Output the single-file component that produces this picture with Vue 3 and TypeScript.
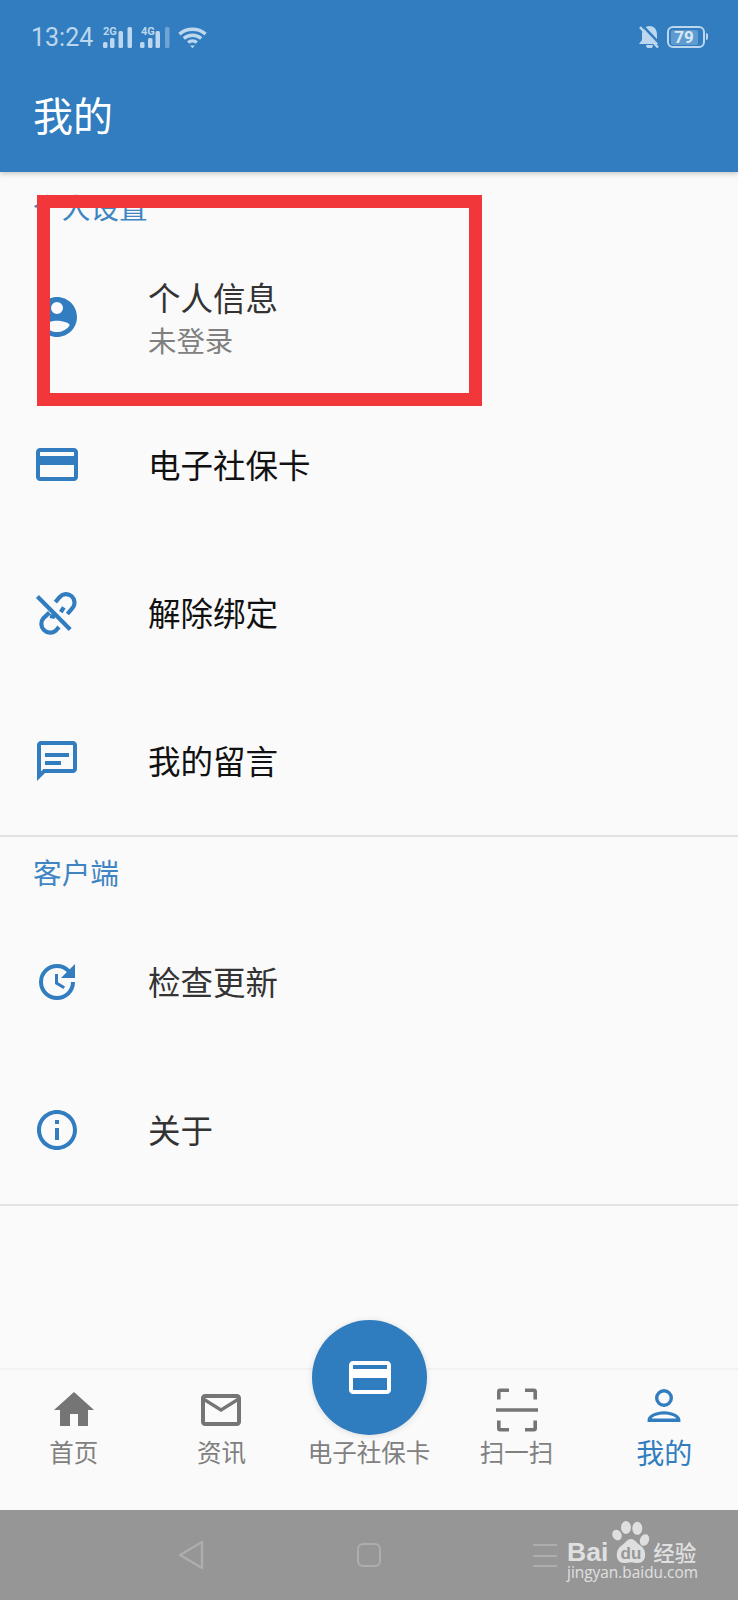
<template>
  <div class="phone">
    <header class="app-header">
      <div class="status-bar">
        <span class="clock">13:24</span>
        <svg class="signal" width="32" height="22" viewBox="0 0 32 22">
          <text x="1" y="9" class="net-label">2G</text>
          <rect x="1" y="16" width="4.500" height="6" rx="1.5" />
          <rect x="8" y="12" width="4.500" height="10" rx="1.5" />
          <rect x="16.500" y="5" width="4.500" height="17" rx="1.5" />
          <rect x="25.500" y="1" width="4.500" height="21" rx="1.5" />
        </svg>
        <svg class="signal" width="32" height="22" viewBox="0 0 32 22">
          <text x="1" y="9" class="net-label">4G</text>
          <rect x="0" y="16" width="4.500" height="6" rx="1.5" />
          <rect x="8" y="12" width="4.500" height="10" rx="1.5" />
          <rect x="15.500" y="5" width="4.500" height="17" rx="1.5" />
          <rect x="25" y="1" width="4.500" height="21" rx="1.5" opacity="0.45" />
        </svg>
        <svg class="wifi" width="29" height="23" viewBox="0 0 30 22" fill="none" stroke="#bcd7ee" stroke-width="3.500">
          <path d="M1.500 7.500C9 .8 21 .8 28.500 7.500" />
          <path d="M6 12c5-4.400 13-4.400 18 0" />
          <path d="M10.500 16.200c2.600-2.200 6.400-2.200 9 0" />
          <path d="M12.500 19.200h5L15 22z" fill="#bcd7ee" stroke="none" />
        </svg>
        <span class="status-spacer"></span>
        <svg class="bell" width="21" height="22" viewBox="0 0 21 22">
          <path d="M10.500 0c5 0 7.500 4 7.500 8.500V14l3 4H0l3-4V8.500C3 4 5.500 0 10.500 0zM7 19h7a3.500 3.500 0 0 1-7 0z" fill="#bcd7ee" />
          <path d="M3 -1 22 19" stroke="#317dbf" stroke-width="2.500" />
          <path d="M1 1 19 21.500" stroke="#bcd7ee" stroke-width="2.500" />
        </svg>
        <div class="battery">
          <span class="battery-level">79</span>
        </div>
      </div>
      <h1 class="title">我的</h1>
    </header>

    <main class="content">
      <section v-for="group in groups" :key="group.title" class="group">
        <h2 class="group-title">{{ group.title }}</h2>
        <div v-for="item in group.items" :key="item.label" class="row">
          <svg class="row-icon" width="48" height="48" viewBox="0 0 24 24" fill="#317dbf">
            <path v-if="item.icon" :d="item.icon" fill-rule="evenodd" />
            <path v-if="item.line" :d="item.line" fill="none" stroke="#317dbf" stroke-width="2.100" />
          </svg>
          <div class="row-text">
            <div :class="['row-label', { dark: item.dark }]">{{ item.label }}</div>
            <div v-if="item.sub" class="row-sub">{{ item.sub }}</div>
          </div>
        </div>
      </section>
    </main>

    <nav class="tab-bar">
      <div v-for="tab in tabs" :key="tab.label" :class="['tab', { active: tab.active }]">
        <svg v-if="tab.icon" class="tab-icon" width="48" height="48" viewBox="0 0 24 24">
          <path :d="tab.icon" fill="currentColor" fill-rule="evenodd" />
        </svg>
        <div v-else class="tab-gap"></div>
        <span class="tab-label">{{ tab.label }}</span>
      </div>
      <div class="fab">
        <svg width="48" height="48" viewBox="0 0 24 24" fill="#fff">
          <path :d="cardIcon" fill-rule="evenodd" />
        </svg>
      </div>
    </nav>

    <footer class="nav-bar">
      <svg class="nav-back" width="28" height="30" viewBox="0 0 28 30" fill="none" stroke="#adadad" stroke-width="2.500" stroke-linejoin="round">
        <path d="M25 2 3 15l22 13z" />
      </svg>
      <span class="nav-home"></span>
      <span class="nav-menu"><i></i><i></i><i></i></span>
      <div class="watermark">
        <div class="wm-logo">
          <span class="wm-bai">Bai</span>
          <svg class="wm-paw" width="38" height="43" viewBox="0 0 38 43" fill="#dfdfdf">
            <ellipse cx="5" cy="14" rx="4.500" ry="5.500" transform="rotate(-30 5 14)" />
            <ellipse cx="14" cy="6.500" rx="5" ry="6.500" />
            <ellipse cx="25.300" cy="7.300" rx="5" ry="6.500" />
            <ellipse cx="32.500" cy="19" rx="4.500" ry="6" transform="rotate(20 32.500 19)" />
            <path d="M19 18c4 0 5.500 4 10 7 6 4 6 17-3 17-3 0-4-.8-7-.8s-4 .8-7 .8c-9 0-9-13-3-17 4.500-3 6-7 10-7z" />
            <text x="19" y="38" class="wm-du">du</text>
          </svg>
          <span class="wm-cn">经验</span>
        </div>
        <div class="wm-url">jingyan.baidu.com</div>
      </div>
    </footer>

    <div class="highlight"></div>
  </div>
</template>

<script setup lang="ts">
interface Row {
  label: string
  icon?: string
  line?: string
  sub?: string
  dark?: boolean
}

interface Group {
  title: string
  items: Row[]
}

interface Tab {
  label: string
  icon?: string
  active?: boolean
}

const cardIcon =
  'M20.5 3.500h-17c-1.100 0-2 .9-2 2V18c0 1.100.9 2 2 2h17c1.100 0 2-.9 2-2V5.500c0-1.100-.9-2-2-2zm0 14.500h-17v-6h17zm0-10.500h-17v-2h17z'

const groups: Group[] = [
  {
    title: '个人设置',
    items: [
      {
        label: '个人信息',
        sub: '未登录',
        dark: true,
        icon: 'M12 2C6.480 2 2 6.480 2 12s4.480 10 10 10 10-4.480 10-10S17.520 2 12 2zm0 2.500a3 3 0 1 1 0 6 3 3 0 0 1 0-6zM12 19.500c-2.600 0-4.900-1.300-6.300-3.300.03-1.500 4.200-2.300 6.300-2.300s6.270.8 6.300 2.300c-1.400 2-3.700 3.300-6.300 3.300z'
      },
      { label: '电子社保卡', icon: cardIcon },
      {
        label: '解除绑定',
        // chain link lying on the diagonal, crossed out the other way
        line: 'M2.200 3.800 18.600 20.200M11.200 6.600l2.200-2.600a4.200 4.200 0 0 1 6.300 5.600l-2.500 2.900M8.200 11.800l-3 2.800a4.400 4.400 0 0 0 6.200 6.200l1.600-1.800M15.400 9.200l-1.500 2.400M8.500 13.500l2.500.5'
      },
      {
        label: '我的留言',
        icon: 'M20 2H4c-1.100 0-2 .9-2 2v18l4-4h14c1.100 0 2-.9 2-2V4c0-1.100-.9-2-2-2zm0 14H5.200L4 17.200V4h16v12zM6 12h8v2H6zm0-4h12v2H6z'
      }
    ]
  },
  {
    title: '客户端',
    items: [
      {
        label: '检查更新',
        dark: true,
        icon: 'M11 8v5l4.250 2.520.77-1.280-3.520-2.090V8H11zm10 2V3l-2.640 2.640A8.960 8.960 0 0 0 12 3a9 9 0 1 0 9 9h-2a7 7 0 1 1-7-7c1.930 0 3.680.79 4.950 2.050L14 10h7z'
      },
      {
        label: '关于',
        dark: true,
        icon: 'M11 7h2v2h-2zm0 4h2v6h-2zm1-9C6.480 2 2 6.480 2 12s4.480 10 10 10 10-4.480 10-10S17.520 2 12 2zm0 18c-4.410 0-8-3.590-8-8s3.590-8 8-8 8 3.590 8 8-3.590 8-8 8z'
      }
    ]
  }
]

const tabs: Tab[] = [
  { label: '首页', icon: 'M10 20v-6h4v6h5v-8h3L12 3 2 12h3v8z' },
  {
    label: '资讯',
    icon: 'M20 4H4c-1.100 0-2 .9-2 2v12c0 1.100.9 2 2 2h16c1.100 0 2-.9 2-2V6c0-1.100-.9-2-2-2zm0 14H4V8l8 5 8-5v10zm-8-7L4 6h16l-8 5z'
  },
  { label: '电子社保卡' },
  {
    label: '扫一扫',
    icon: 'M2 2.700c0-.9.6-1.500 1.500-1.500H8v1.800H3.800v3.800H2zM16 1.200h4.500c.9 0 1.500.6 1.500 1.500v4.100h-1.800V3H16zM1.500 11.100h21v1.800h-21zM2 17.200h1.800V21H8v1.800H3.500c-.9 0-1.500-.6-1.500-1.500zM20.200 17.200H22v4.100c0 .9-.6 1.500-1.500 1.500H16V21h4.200z'
  },
  {
    label: '我的',
    active: true,
    icon: 'M12 1.500a4.500 4.500 0 1 1 0 9 4.500 4.500 0 0 1 0-9zm0 1.700a2.800 2.800 0 1 0 0 5.600 2.800 2.800 0 0 0 0-5.600zM3.800 18v-1.200c0-2.200 4.200-4.200 8.200-4.200s8.200 2 8.200 4.200V18zm2-1.700h12.400c-.5-1.100-3.400-2-6.200-2s-5.700.9-6.200 2z'
  }
]
</script>

<style>
html,
body {
  margin: 0;
  background: #fafafa;
}
</style>

<style scoped>
.phone {
  position: relative;
  display: flex;
  flex-direction: column;
  width: 738px;
  height: 1600px;
  overflow: hidden;
  background: #fafafa;
  font-family: 'Noto Sans CJK SC', 'Noto Sans', sans-serif;
}

.app-header {
  flex: none;
  height: 172px;
  background: #317dbf;
  box-shadow: 0 2px 5px rgba(0, 0, 0, 0.2);
  position: relative;
  z-index: 1;
}

.status-bar {
  display: flex;
  align-items: center;
  height: 22px;
  padding: 26px 33px 0 31px;
}

.clock {
  font-family: Roboto, sans-serif;
  font-size: 25px;
  color: #bcd7ee;
  margin-right: 9px;
}

.signal {
  margin-right: 6px;
  fill: #bcd7ee;
}

.net-label {
  font-family: Roboto, sans-serif;
  font-size: 11px;
  font-weight: 700;
}

.status-spacer {
  flex: 1;
}

.bell {
  margin-right: 7px;
}

.battery {
  position: relative;
  box-sizing: border-box;
  width: 38px;
  height: 22px;
  border: 2.500px solid #bcd7ee;
  border-radius: 6px;
  padding: 1.500px;
  display: flex;
}

.battery::after {
  content: '';
  position: absolute;
  right: -5px;
  top: 5px;
  width: 2px;
  height: 7px;
  border-radius: 0 2px 2px 0;
  background: #bcd7ee;
}

.battery-level {
  width: 27px;
  background: #5f9bd1;
  border-radius: 2px;
  font-family: Roboto, sans-serif;
  font-size: 17px;
  font-weight: 700;
  line-height: 14px;
  color: #d8e8f5;
  text-align: center;
}

.title {
  margin: 38px 0 0 33px;
  font-size: 40px;
  font-weight: 400;
  line-height: 56px;
  color: #fff;
}

.content {
  flex: 1;
}

.group {
  border-bottom: 2px solid #e3e3e3;
}

.group-title {
  margin: 0;
  height: 71px;
  padding: 16px 0 0 33px;
  box-sizing: border-box;
  font-size: 28.700px;
  font-weight: 400;
  line-height: 38px;
  color: #3e85c2;
}

.row {
  display: flex;
  align-items: center;
  height: 148px;
  padding-left: 33px;
}

.row-icon {
  flex: none;
  margin-right: 67px;
}

.row-label {
  padding-bottom: 3px;
  font-size: 32.500px;
  line-height: 42px;
  color: #111;
}

.row-label.dark {
  color: #333;
}

.row-sub {
  font-size: 28.400px;
  line-height: 38px;
  color: #808080;
}

.tab-bar {
  position: relative;
  flex: none;
  display: grid;
  grid-template-columns: repeat(5, 1fr);
  height: 142px;
  border-top: 2px solid #f2f2f2;
  box-sizing: border-box;
}

.tab {
  display: flex;
  flex-direction: column;
  align-items: center;
  padding-top: 16px;
  color: #757575;
}

.tab.active {
  color: #317dbf;
}

.tab-icon,
.tab-gap {
  display: block;
  width: 48px;
  height: 48px;
}

.tab-label {
  margin-top: 1px;
  font-size: 24.500px;
  line-height: 34px;
  color: #808080;
}

.tab.active .tab-label {
  font-size: 28px;
  color: #317dbf;
}

.fab {
  position: absolute;
  left: 312px;
  top: -50px;
  width: 115px;
  height: 115px;
  border-radius: 50%;
  background: #2f7dbf;
  display: flex;
  align-items: center;
  justify-content: center;
  box-shadow: 0 1px 6px rgba(0, 0, 0, 0.12);
}

.nav-bar {
  position: relative;
  flex: none;
  height: 90px;
  background: #969696;
}

.nav-back {
  position: absolute;
  left: 177px;
  top: 30px;
}

.nav-home {
  position: absolute;
  left: 357px;
  top: 33px;
  width: 20px;
  height: 20px;
  border: 2px solid #adadad;
  border-radius: 6px;
}

.nav-menu {
  position: absolute;
  left: 533px;
  top: 34px;
  display: flex;
  flex-direction: column;
  gap: 8.500px;
}

.nav-menu i {
  display: block;
  width: 24px;
  height: 2px;
  background: #adadad;
}

.watermark {
  position: absolute;
  left: 567px;
  top: 11px;
  width: 140px;
  color: #e0e0e0;
}

.wm-logo {
  display: flex;
  align-items: flex-end;
  height: 43px;
}

.wm-bai {
  margin-bottom: -3px;
  font-family: 'Liberation Sans', sans-serif;
  font-weight: 700;
  font-size: 26.500px;
  line-height: 30px;
}

.wm-paw {
  flex: none;
  margin-left: 4px;
}

.wm-du {
  font-family: 'Liberation Sans', sans-serif;
  font-size: 17px;
  font-weight: 700;
  text-anchor: middle;
  fill: #969696;
}

.wm-cn {
  margin-left: 3px;
  font-size: 21.500px;
  line-height: 24px;
  font-weight: 500;
  white-space: nowrap;
}

.wm-url {
  margin-top: 0;
  font-family: 'Open Sans', sans-serif;
  font-size: 15.400px;
  line-height: 18px;
  white-space: nowrap;
}

.highlight {
  position: absolute;
  left: 37px;
  top: 195px;
  width: 445px;
  height: 211px;
  box-sizing: border-box;
  border: 13px solid #f13739;
}
</style>
